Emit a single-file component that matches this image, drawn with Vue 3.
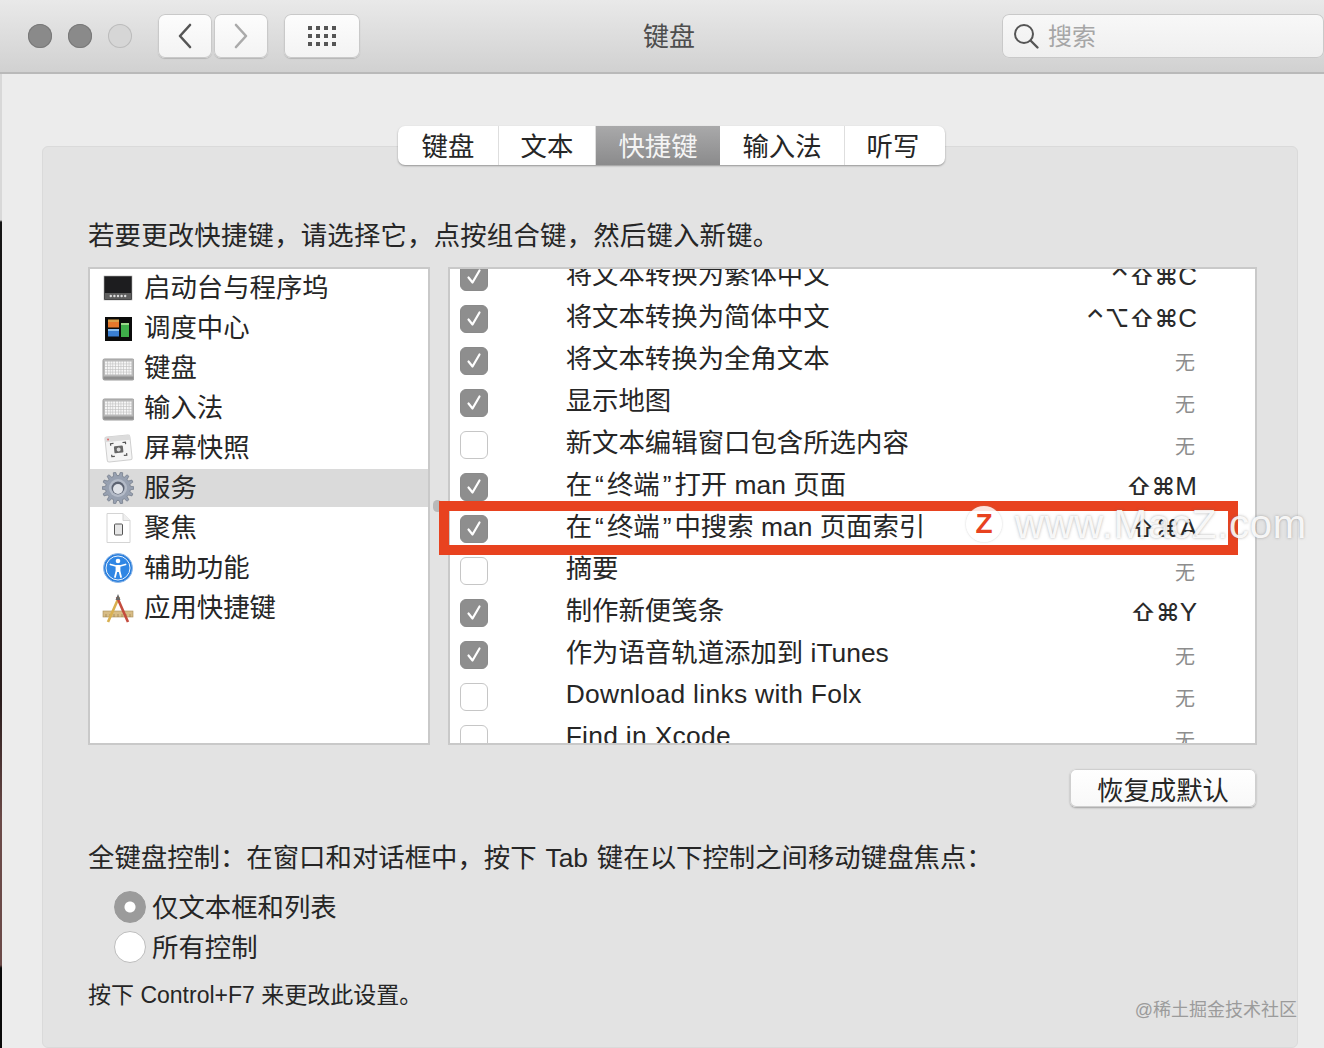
<script setup>
const sideItems = [
  { icon: 'launch', label: '启动台与程序坞' },
  { icon: 'mission', label: '调度中心' },
  { icon: 'keyboard', label: '键盘' },
  { icon: 'keyboard', label: '输入法' },
  { icon: 'shot', label: '屏幕快照' },
  { icon: 'gear', label: '服务', selected: true },
  { icon: 'doc', label: '聚焦' },
  { icon: 'access', label: '辅助功能' },
  { icon: 'app', label: '应用快捷键' },
]

const rawRows = [
  { on: true, name: '将文本转换为繁体中文', mods: '⌃⇧⌘', letter: 'C' },
  { on: true, name: '将文本转换为简体中文', mods: '⌃⌥⇧⌘', letter: 'C' },
  { on: true, name: '将文本转换为全角文本' },
  { on: true, name: '显示地图' },
  { on: false, name: '新文本编辑窗口包含所选内容' },
  { on: true, name: '在“终端”打开 man 页面', mods: '⇧⌘', letter: 'M' },
  { on: true, name: '在“终端”中搜索 man 页面索引', mods: '⇧⌘', letter: 'A' },
  { on: false, name: '摘要' },
  { on: true, name: '制作新便笺条', mods: '⇧⌘', letter: 'Y' },
  { on: true, name: '作为语音轨道添加到 iTunes' },
  { on: false, name: 'Download links with Folx' },
  { on: false, name: 'Find in Xcode' },
]
const rows = rawRows.map((r) => ({
  ...r,
  latin: /^[A-Za-z ]+$/.test(r.name),
  parts: r.name.split(/([“”])/).filter(Boolean),
}))

const tabs = [
  { label: '键盘', width: 101 },
  { label: '文本', width: 97 },
  { label: '快捷键', width: 124, active: true },
  { label: '输入法', width: 125 },
  { label: '听写', width: 100 },
]

const gridDots = []
for (let y = 0; y < 3; y++) for (let x = 0; x < 4; x++) gridDots.push({ x: x * 8, y: y * 8 })

const keyDots = []
for (let y = 0; y < 5; y++) for (let x = 0; x < 10; x++) keyDots.push({ x: 3 + x * 2.7, y: 9.5 + y * 2.7 })

const gearPoints = (() => {
  const pts = []
  const n = 14
  for (let i = 0; i < n; i++) {
    const a = (i / n) * Math.PI * 2
    const step = (Math.PI * 2) / n
    const add = (r, t) => pts.push(`${(16 + r * Math.cos(t)).toFixed(2)},${(16 + r * Math.sin(t)).toFixed(2)}`)
    add(12.5, a - step * 0.32)
    add(16, a - step * 0.16)
    add(16, a + step * 0.16)
    add(12.5, a + step * 0.32)
  }
  return pts.join(' ')
})()
</script>

<template>
  <div class="page">
    <div class="edge"></div>

    <header class="titlebar">
      <div class="lights">
        <span class="light"></span>
        <span class="light"></span>
        <span class="light off"></span>
      </div>
      <div class="nav">
        <button class="tool nav-btn">
          <svg width="16" height="26" viewBox="0 0 16 26"><path d="M13 2 3 13l10 11" fill="none" stroke="#555" stroke-width="2.6" stroke-linecap="round" stroke-linejoin="round" /></svg>
        </button>
        <button class="tool nav-btn">
          <svg width="16" height="26" viewBox="0 0 16 26"><path d="m3 2 10 11L3 24" fill="none" stroke="#aaa" stroke-width="2.6" stroke-linecap="round" stroke-linejoin="round" /></svg>
        </button>
      </div>
      <button class="tool grid-btn">
        <svg width="30" height="22" viewBox="0 0 30 22">
          <rect v-for="(d, i) in gridDots" :key="i" :x="d.x + 1" :y="d.y + 1" width="4" height="4" fill="#555" />
        </svg>
      </button>
      <div class="win-title">键盘</div>
      <div class="search">
        <svg width="28" height="28" viewBox="0 0 28 28"><circle cx="12" cy="12" r="9" fill="none" stroke="#555" stroke-width="2" /><path d="m18.500 18.500 7 7" stroke="#555" stroke-width="2.4" stroke-linecap="round" /></svg>
        <span class="search-label">搜索</span>
      </div>
    </header>

    <main class="content">
      <nav class="tabs">
        <div v-for="t in tabs" :key="t.label" class="tab" :class="{ active: t.active }" :style="{ width: t.width + 'px' }">{{ t.label }}</div>
      </nav>

      <section class="group">
        <p class="intro">若要更改快捷键，请选择它，点按组合键，然后键入新键。</p>

        <div class="lists">
          <div class="list side">
            <div class="side-inner">
              <div v-for="item in sideItems" :key="item.label" class="side-row" :class="{ selected: item.selected }">
                <svg class="icon" width="32" height="32" viewBox="0 0 32 32">
                  <template v-if="item.icon === 'launch'">
                    <rect x="2" y="4" width="28" height="24" fill="#1d1d1f" stroke="#aaa" stroke-width=".6" />
                    <rect x="3" y="21" width="26" height="6" fill="#5e5e5e" />
                    <circle v-for="n in 5" :key="n" :cx="5.200 + n * 3.600" cy="24" r="1.200" fill="#ddd" />
                  </template>
                  <template v-else-if="item.icon === 'mission'">
                    <rect x="3" y="5" width="27" height="24" fill="#0b0b0b" />
                    <rect x="6" y="7.500" width="11" height="2.500" fill="#d9a04a" />
                    <rect x="6" y="10" width="11" height="5.500" fill="#e5782c" />
                    <rect x="6" y="17" width="11" height="2" fill="#8cc0ee" />
                    <rect x="6" y="19" width="11" height="5.500" fill="#3a7fd2" />
                    <rect x="19" y="11" width="8" height="2" fill="#9ad88a" />
                    <rect x="19" y="13" width="8" height="12" fill="#3fae4a" />
                  </template>
                  <template v-else-if="item.icon === 'keyboard'">
                    <rect x="1" y="7" width="31" height="21" rx="1.500" fill="#b9b9b9" stroke="#9b9b9b" />
                    <rect x="1.500" y="24.500" width="30" height="3" fill="#8f8f8f" />
                    <rect v-for="(d, i) in keyDots" :key="i" :x="d.x" :y="d.y" width="2.200" height="2.200" fill="#f6f6f6" />
                  </template>
                  <template v-else-if="item.icon === 'shot'">
                    <g transform="rotate(-6 16 16)">
                      <rect x="4" y="4" width="25" height="25" rx="2" fill="#f4f4f4" stroke="#cfcfcf" />
                      <rect x="4" y="4" width="25" height="5" fill="#dcdcdc" />
                      <circle cx="7" cy="6.500" r="1" fill="#d66" />
                      <path d="M9 13v-2h3M24 13v-2h-3M9 22v2h3M24 22v2h-3" fill="none" stroke="#555" stroke-width="1.200" />
                      <rect x="12" y="14" width="9" height="7" rx="1" fill="#666" />
                      <circle cx="16.500" cy="17.500" r="2" fill="#ddd" />
                    </g>
                  </template>
                  <template v-else-if="item.icon === 'gear'">
                    <polygon :points="gearPoints" fill="#97a0b0" stroke="#707887" stroke-width=".7" />
                    <circle cx="16" cy="16" r="9" fill="#b4bbc8" />
                    <circle cx="16" cy="16" r="6.500" fill="#5c6372" />
                    <circle cx="16" cy="17" r="5" fill="#dfe2e8" />
                  </template>
                  <template v-else-if="item.icon === 'doc'">
                    <path d="M5 1.500h16l7 7v22H5z" fill="#fff" stroke="#d4d4d4" />
                    <path d="M21 1.500v7h7" fill="#eee" stroke="#d4d4d4" />
                    <rect x="12.500" y="12" width="8" height="11" rx="1" fill="#e6e6e6" stroke="#555" />
                  </template>
                  <template v-else-if="item.icon === 'access'">
                    <circle cx="16" cy="16" r="14.500" fill="#2b7fdc" stroke="#8fb9ea" />
                    <circle cx="16" cy="16" r="12" fill="#2f86e4" stroke="#e8f1fb" stroke-width="1" />
                    <circle cx="16" cy="9" r="2.300" fill="#fff" />
                    <path d="M8.500 12.500 14 14M23.500 12.500 18 14M14.500 14h3v5h-3zM14.500 19 13 25M17.500 19l1.500 6" fill="#fff" stroke="#fff" stroke-width="1.800" stroke-linecap="round" stroke-linejoin="round" />
                  </template>
                  <template v-else>
                    <rect x="1" y="19" width="30" height="6" fill="#d8bd86" stroke="#a88e58" stroke-width=".6" />
                    <path d="M4 22v3M8 22v3M12 22v3M16 22v3M20 22v3M24 22v3M28 22v3" stroke="#8d7546" stroke-width=".6" />
                    <path d="M17 5 6 30" stroke="#d9b050" stroke-width="2.600" />
                    <path d="M15 5 26 30" stroke="#c44c3e" stroke-width="2.600" />
                    <path d="M16 2 13.500 8h5z" fill="#666" />
                  </template>
                </svg>
                <span>{{ item.label }}</span>
              </div>
            </div>
          </div>

          <div class="list main-list">
            <div class="rows">
              <div v-for="r in rows" :key="r.name" class="row">
                <span class="check" :class="{ on: r.on }">
                  <svg v-if="r.on" width="18" height="18" viewBox="0 0 18 18"><path d="m3.500 9.500 4 5 7-12" fill="none" stroke="#fff" stroke-width="2.200" stroke-linecap="round" stroke-linejoin="round" /></svg>
                </span>
                <span class="name" :class="{ latin: r.latin }"><template v-for="(p, i) in r.parts" :key="i"><span v-if="p === '“' || p === '”'" class="quote">{{ p }}</span><template v-else>{{ p }}</template></template></span>
                <span v-if="r.letter" class="key"><span class="mods">{{ r.mods }}</span>{{ r.letter }}</span>
                <span v-else class="none">无</span>
              </div>
            </div>
          </div>
        </div>

        <div class="actions"><button class="restore">恢复成默认</button></div>

        <p class="full">全键盘控制：在窗口和对话框中，按下 Tab 键在以下控制之间移动键盘焦点：</p>

        <div class="radios">
          <label class="radio"><span class="dot on"></span><span class="radio-label">仅文本框和列表</span></label>
          <label class="radio"><span class="dot"></span><span class="radio-label">所有控制</span></label>
        </div>

        <p class="hint">按下 Control+F7 来更改此设置。</p>
      </section>
    </main>

    <div class="handle"></div>
    <div class="highlight"></div>
    <div class="mark">
      <span class="mark-logo">Z</span>
      <span class="mark-text">www.MacZ.com</span>
    </div>
    <div class="credit">@稀土掘金技术社区</div>
  </div>
</template>

<style>
html, body { margin: 0; background: #ececec; }
</style>

<style scoped>
.page {
  position: relative;
  width: 1324px;
  height: 1048px;
  overflow: hidden;
  background: #ececec;
  color: #262626;
  font-family: "Liberation Sans", "Noto Sans CJK SC", sans-serif;
  font-size: 26.4px;
}
.edge {
  position: absolute;
  left: 0;
  top: 0;
  bottom: 0;
  width: 2px;
  background: linear-gradient(#d8d8d8 0, #d8d8d8 220px, #151515 222px, #2a1c1c 700px, #6b4a48 820px, #6b4a48 965px, #0a0a0a 968px);
}
.titlebar {
  display: flex;
  align-items: center;
  height: 72px;
  padding-left: 28px;
  background: linear-gradient(#e9e9e9, #d1d1d1);
  border-bottom: 2px solid #b9b9b9;
  position: relative;
}
.lights { display: flex; gap: 16px; width: 130px; }
.light {
  width: 24px;
  height: 24px;
  border-radius: 50%;
  background: #8a8a8a;
  box-shadow: inset 0 0 0 1px #797979;
}
.light.off { background: #d6d6d6; box-shadow: inset 0 0 0 1px #bcbcbc; }
.nav { display: flex; gap: 2px; }
.tool {
  display: flex;
  align-items: center;
  justify-content: center;
  height: 44px;
  padding: 0;
  background: linear-gradient(#fdfdfd, #f3f3f3);
  border: 0;
  border-radius: 7px;
  box-shadow: inset 0 0 0 1px #c9c9c9, 0 1px 1px #b5b5b5;
}
.nav-btn { width: 54px; }
.grid-btn { width: 76px; margin-left: 16px; }
.win-title {
  position: absolute;
  left: 643px;
  top: 19px;
  line-height: 36px;
  font-size: 26px;
  color: #4d4d4d;
}
.search {
  display: flex;
  align-items: center;
  gap: 8px;
  width: 322px;
  box-sizing: border-box;
  height: 44px;
  margin-left: auto;
  padding-left: 10px;
  background: linear-gradient(#f8f8f8, #efefef);
  border-radius: 7px;
  box-shadow: inset 0 0 0 1px #c9c9c9;
  color: #a6a6a6;
  font-size: 24px;
}
.search-label { position: relative; top: -2px; }
.content { padding: 52px 26px 0 42px; }
.tabs {
  position: relative;
  z-index: 1;
  display: flex;
  width: 547px;
  height: 39px;
  margin-left: 356px;
  margin-bottom: -19px;
  border-radius: 7px;
  overflow: hidden;
  background: #fff;
  box-shadow: 0 1px 2px rgba(0, 0, 0, .35);
}
.tab {
  display: flex;
  align-items: center;
  justify-content: center;
  box-sizing: border-box;
  padding-bottom: 3px;
  border-right: 1px solid #dedede;
  font-size: 26.4px;
}
.tab:last-child { border-right: 0; padding-right: 4px; }
.tab.active {
  background: linear-gradient(#a9a9aa, #8b8b8c);
  color: #f4f4f4;
  border-right: 0;
}
.group {
  height: 902px;
  box-sizing: border-box;
  padding: 69px 40px 0 45px;
  background: #e3e3e3;
  border: 1px solid #dadada;
  border-radius: 6px;
}
.intro, .full, .hint { margin: 0; line-height: 40px; }
.intro { letter-spacing: .2px; }
.lists { display: flex; gap: 18px; margin-top: 11px; }
.list {
  height: 478px;
  box-sizing: border-box;
  overflow: hidden;
  background: #fff;
  border: 2px solid #c9c9c9;
}
.side { width: 342px; }
.main-list { width: 810px; }
.side-inner { margin-top: -2px; }
.side-row {
  display: flex;
  align-items: center;
  gap: 10px;
  height: 40px;
  padding-left: 12px;
  border-top: 2px solid transparent;
  box-sizing: border-box;
  background-clip: padding-box;
}
.side-row span { position: relative; top: -3px; }
.side-row.selected { background-color: #dadada; }
.icon { flex: none; }
.rows { margin-top: -15px; }
.row {
  display: flex;
  align-items: center;
  height: 42px;
  padding: 0 59px 0 10px;
}
.check {
  display: flex;
  align-items: center;
  justify-content: center;
  flex: none;
  box-sizing: border-box;
  width: 28px;
  height: 28px;
  margin-top: 4px;
  background: #fff;
  border: 1px solid #c6c6c6;
  border-radius: 6px;
}
.check.on { background: #8e8e8e; border-color: #8a8a8a; }
.name {
  margin-left: 78px;
  margin-bottom: 5px;
}
.name.latin { margin-bottom: 2px; letter-spacing: .3px; }
.quote { margin: 0 3px; }
.key {
  margin-left: auto;
  margin-right: -1px;
  margin-top: 2px;
  font-size: 26px;
  color: #2a2a2a;
  white-space: nowrap;
}
.mods { font-family: Inter, "DejaVu Sans", sans-serif; font-size: 24px; font-weight: 500; }
.none {
  margin-left: auto;
  margin-right: 1px;
  margin-top: 4px;
  font-size: 20px;
  color: #8d8d8d;
}
.actions { display: flex; justify-content: flex-end; margin-top: 24px; }
.restore {
  width: 186px;
  height: 38px;
  padding: 0 0 3px;
  margin-right: 1px;
  font: inherit;
  color: inherit;
  background: linear-gradient(#ffffff, #f8f8f8);
  border: 0;
  border-radius: 6px;
  box-shadow: inset 0 0 0 1px #cfcfcf, 0 1px 2px rgba(0, 0, 0, .3);
}
.full { margin-top: 31px; word-spacing: 1.5px; }
.radios { display: flex; flex-direction: column; gap: 8px; margin: 13px 0 0 26px; }
.radio { display: flex; align-items: center; gap: 6px; height: 32px; }
.radio-label { position: relative; top: -2px; }
.dot {
  box-sizing: border-box;
  width: 32px;
  height: 32px;
  background: #fff;
  border: 1px solid #bdbdbd;
  border-radius: 50%;
}
.dot.on { background: radial-gradient(circle, #fff 0 5px, #9b9b9b 6px); border-color: #9b9b9b; }
.hint { margin-top: 12px; font-size: 23px; }
.handle {
  position: absolute;
  left: 433px;
  top: 500px;
  width: 9px;
  height: 12px;
  border-radius: 5px;
  background: #b9b9b9;
}
.highlight {
  position: absolute;
  left: 439px;
  top: 501px;
  width: 799px;
  height: 54px;
  box-sizing: border-box;
  border: 10px solid #e8421f;
}
.mark {
  position: absolute;
  left: 966px;
  top: 501px;
  display: flex;
  align-items: center;
  gap: 13px;
  color: rgba(255, 255, 255, .9);
  font-family: "Liberation Sans", sans-serif;
  text-shadow: 0 0 3px rgba(110, 110, 110, .55);
}
.mark-logo {
  width: 36px;
  height: 36px;
  border-radius: 50%;
  background: rgba(255, 255, 255, .85);
  box-shadow: 0 0 2px rgba(150, 150, 150, .5);
  color: #e8421f;
  text-align: center;
  line-height: 36px;
  font-size: 28px;
  font-weight: 700;
  text-shadow: none;
}
.mark-text { font-size: 40px; line-height: 46px; letter-spacing: .8px; }
.credit {
  position: absolute;
  right: 27px;
  top: 998px;
  font-size: 18px;
  line-height: 24px;
  color: #9b9b9b;
}
</style>
